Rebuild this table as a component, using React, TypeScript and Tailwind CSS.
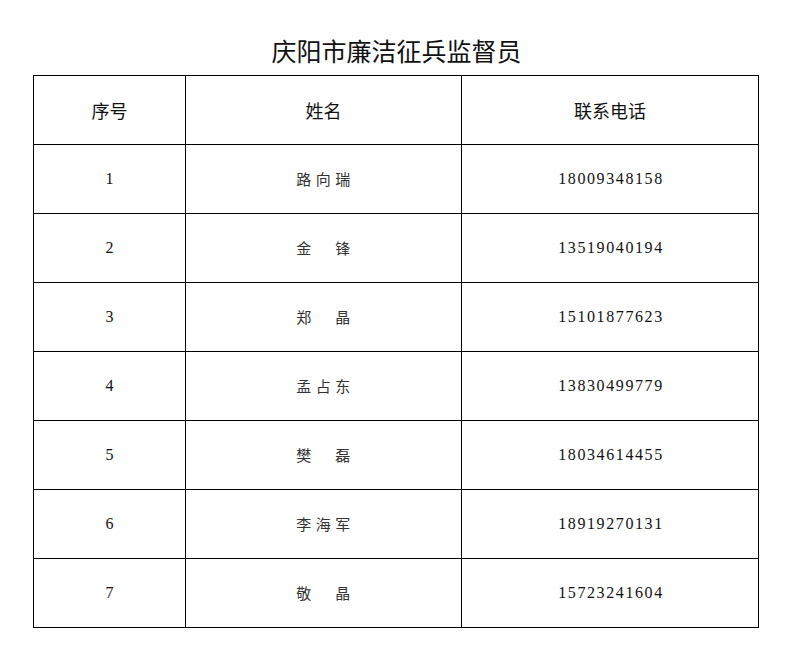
import React from 'react'

interface Member {
  no: string
  name: string
  phone: string
}

const members: Member[] = [
  { no: '1', name: '路向瑞', phone: '18009348158' },
  { no: '2', name: '金\u3000锋', phone: '13519040194' },
  { no: '3', name: '郑\u3000晶', phone: '15101877623' },
  { no: '4', name: '孟占东', phone: '13830499779' },
  { no: '5', name: '樊\u3000磊', phone: '18034614455' },
  { no: '6', name: '李海军', phone: '18919270131' },
  { no: '7', name: '敬\u3000晶', phone: '15723241604' },
]

const sans = 'font-["Noto_Sans_CJK_SC","Noto_Sans",sans-serif]'
const serif = 'font-["Liberation_Serif","Noto_Sans_CJK_SC",serif]'

export default function App() {
  return (
    <div className="w-[793px] h-[657px] bg-white text-[#111]">
      {/* title */}
      <div className="h-[75px] pt-[25px] flex items-center justify-center">
        <h1 className={`${sans} text-[25px] leading-none`}>庆阳市廉洁征兵监督员</h1>
      </div>

      <div className="pl-[33px]">
        <table className="table-fixed border-collapse w-[725px]">
          <colgroup>
            <col className="w-[152px]" />
            <col className="w-[276px]" />
            <col className="w-[297px]" />
          </colgroup>
          <thead>
            <tr className="h-[69px]">
              <th className={`${sans} border border-black text-[18px] font-normal`}>序号</th>
              <th className={`${sans} border border-black text-[18px] font-normal`}>姓名</th>
              <th className={`${sans} border border-black text-[18px] font-normal`}>联系电话</th>
            </tr>
          </thead>
          <tbody>
            {members.map((m) => (
              <tr key={m.no} className="h-[69px]">
                <td className={`${serif} border border-black text-center text-[16px]`}>{m.no}</td>
                <td className={`${sans} border border-black text-center text-[15px] text-[#333] tracking-[4.5px] pl-[4px]`}>
                  {m.name}
                </td>
                <td className={`${serif} border border-black text-center text-[16px] tracking-[1.6px] pl-[2px]`}>
                  {m.phone}
                </td>
              </tr>
            ))}
          </tbody>
        </table>
      </div>
    </div>
  )
}
